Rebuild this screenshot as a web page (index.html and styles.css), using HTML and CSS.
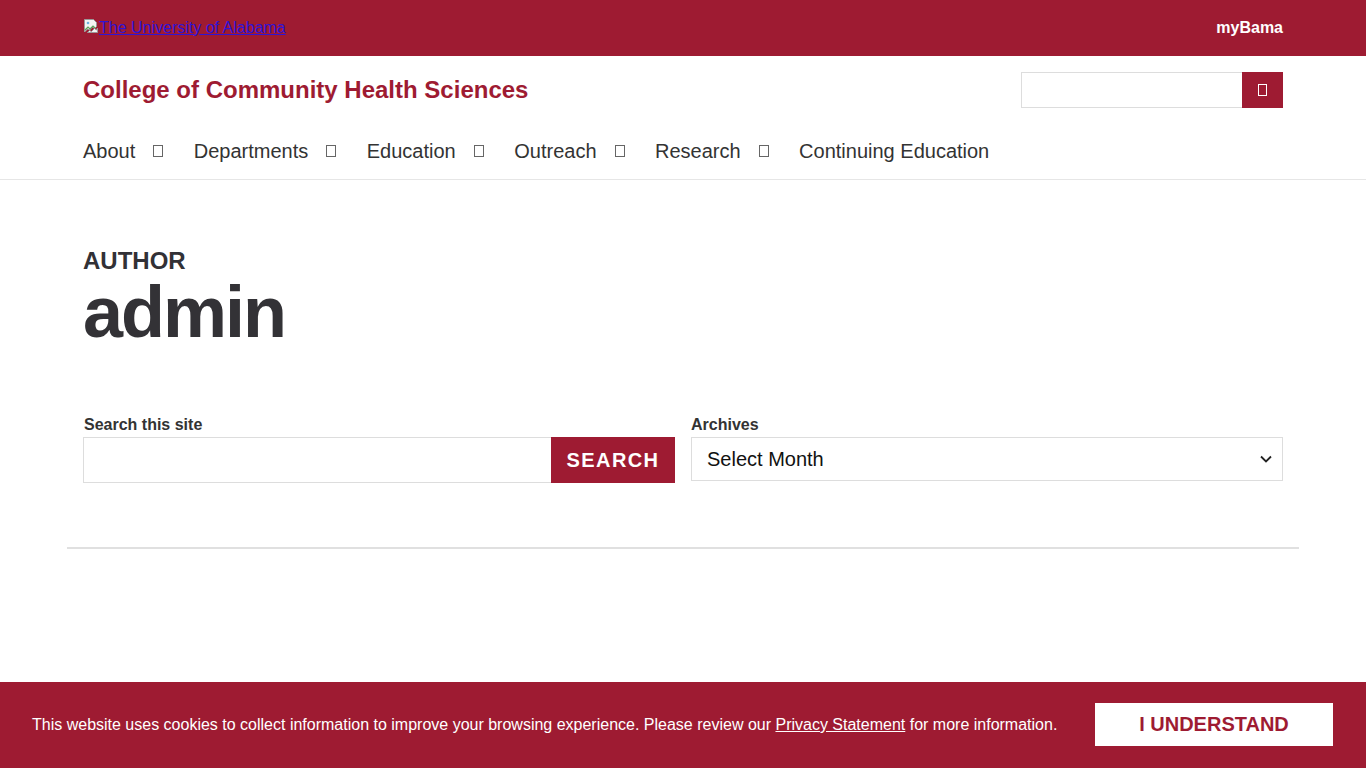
FILE: index.html
```html
<!DOCTYPE html>
<html lang="en">
<head>
<meta charset="utf-8">
<title>admin – College of Community Health Sciences</title>
<link rel="stylesheet" href="styles.css">
</head>
<body>
<header>
  <div class="topbar">
    <div class="container topbar-inner">
      <a class="ua-logo" href="#"><svg class="broken" width="16" height="16" viewBox="0 0 16 16"><path d="M1.5 1.5h9l3 3v4l-2 2-2-1.5-3 3-2-1-3 3z" fill="#f4f4f4" stroke="#9a9a9a"/><path d="M2 12l3-3 2 2 3-3 2 2" fill="none" stroke="#5aa05a" stroke-width="1.2"/><circle cx="5" cy="5" r="1.3" fill="#6bb0e0"/><path d="M14.5 10v4.5h-10l2-2 2 1 3-3 2 1.5z" fill="#f4f4f4" stroke="#9a9a9a"/></svg>The University of Alabama</a>
      <a class="mybama" href="#">myBama</a>
    </div>
  </div>
  <div class="container header-main">
    <a class="site-title" href="#">College of Community Health Sciences</a>
    <form class="header-search">
      <input type="text" class="header-search-input" aria-label="Search">
      <button type="button" class="header-search-btn"><span class="tofu tofu-white"></span></button>
    </form>
  </div>
  <nav class="main-nav">
    <ul class="container nav-list">
      <li><a href="#">About</a><span class="tofu"></span></li>
      <li><a href="#">Departments</a><span class="tofu"></span></li>
      <li><a href="#">Education</a><span class="tofu"></span></li>
      <li><a href="#">Outreach</a><span class="tofu"></span></li>
      <li><a href="#">Research</a><span class="tofu"></span></li>
      <li><a href="#">Continuing Education</a></li>
    </ul>
  </nav>
</header>

<main class="container main">
  <p class="kicker">AUTHOR</p>
  <h1 class="page-title">admin</h1>

  <div class="widgets">
    <div class="widget">
      <label class="widget-label label-search">Search this site</label>
      <div class="search-row">
        <input type="text" class="search-input" aria-label="Search this site">
        <button type="button" class="search-btn">SEARCH</button>
      </div>
    </div>
    <div class="widget">
      <label class="widget-label">Archives</label>
      <div class="select-box">
        <span>Select Month</span>
        <svg width="14" height="10" viewBox="0 0 14 10"><path d="M2 2.5l5 5 5-5" fill="none" stroke="#222" stroke-width="1.8"/></svg>
      </div>
    </div>
  </div>
</main>
<div class="rule-wrap"><hr class="rule"></div>

<div class="cookie-bar">
  <p class="cookie-text">This website uses cookies to collect information to improve your browsing experience. Please review our <a href="#">Privacy Statement</a> for more information.</p>
  <button type="button" class="cookie-btn">I UNDERSTAND</button>
</div>
</body>
</html>
```

FILE: styles.css
```css
* { box-sizing: border-box; }
html, body { margin: 0; padding: 0; }
body {
  font-family: "Liberation Sans", Arial, sans-serif;
  color: #333;
  background: #fff;
}
.container {
  width: 1200px;
  margin: 0 auto;
}
.topbar {
  background: #9e1b32;
  height: 56px;
}
.topbar-inner {
  height: 56px;
  display: flex;
  align-items: center;
  justify-content: space-between;
}
.ua-logo {
  display: flex;
  align-items: flex-start;
  font-size: 16px;
  line-height: 18px;
  color: #2f14d6;
  text-decoration: underline;
  margin-top: -1px;
}
.broken { flex: none; margin-top: -1px; }
.mybama {
  color: #fff;
  font-weight: bold;
  font-size: 16px;
  text-decoration: none;
  margin-top: 0;
}
.header-main {
  display: flex;
  justify-content: space-between;
  align-items: center;
  padding-top: 16px;
  height: 52px;
}
.site-title {
  color: #9e1b32;
  font-weight: bold;
  font-size: 24px;
  text-decoration: none;
}
.header-search {
  display: flex;
  height: 36px;
}
.header-search-input {
  width: 221px;
  height: 36px;
  border: 1px solid #ddd;
  border-right: none;
  margin: 0;
  padding: 0 8px;
  font-size: 16px;
}
.header-search-btn {
  width: 41px;
  height: 36px;
  background: #9e1b32;
  border: none;
  margin: 0;
  padding: 0;
  display: flex;
  align-items: center;
  justify-content: center;
}
.tofu {
  display: inline-block;
  width: 10px;
  height: 12px;
  border: 1px solid #666;
  margin-left: 18px;
  flex: none;
}
.tofu-white {
  border-color: #fff;
  width: 9px;
  margin-left: 0;
}
.main-nav {
  border-bottom: 1px solid #e6e6e6;
  margin-top: 31px;
}
.nav-list {
  list-style: none;
  padding: 0 0 16px;
  display: flex;
  gap: 30.5px;
}
.nav-list li {
  display: flex;
  align-items: center;
  font-size: 20px;
  line-height: 24px;
}
.nav-list a {
  color: #333;
  text-decoration: none;
}
.main {
  padding-top: 67px;
}
.kicker {
  margin: 0;
  font-size: 24px;
  line-height: 28px;
  font-weight: bold;
  color: #323136;
}
.page-title {
  margin: 1px 0 0;
  font-size: 72px;
  line-height: 72px;
  font-weight: bold;
  letter-spacing: -2px;
  color: #333236;
}
.widgets {
  display: grid;
  grid-template-columns: 1fr 1fr;
  gap: 16px;
  margin-top: 67px;
}
.widget-label {
  display: block;
  font-size: 16px;
  line-height: 20px;
  font-weight: bold;
  color: #333;
  margin: 0 0 2px 0;
}
.label-search { margin-left: 1px; }
.search-row {
  display: flex;
  height: 46px;
}
.search-input {
  flex: 1;
  height: 46px;
  border: 1px solid #ddd;
  border-right: none;
  margin: 0;
  font-size: 20px;
  padding: 0 12px;
}
.search-btn {
  width: 124px;
  height: 46px;
  background: #9e1b32;
  color: #fff;
  border: none;
  margin: 0;
  font-family: "Liberation Sans", Arial, sans-serif;
  font-weight: bold;
  font-size: 20px;
  letter-spacing: 1.4px;
}
.select-box {
  height: 44px;
  border: 1px solid #ddd;
  display: flex;
  align-items: center;
  justify-content: space-between;
  padding: 0 9px 0 15px;
  font-size: 20px;
  color: #111;
}
.rule-wrap {
  width: 1232px;
  margin: 64px auto 0;
}
.rule {
  margin: 0;
  border: none;
  height: 2px;
  background: #e0e0e0;
}
.cookie-bar {
  position: fixed;
  left: 0;
  right: 0;
  bottom: 0;
  height: 86px;
  background: #9e1b32;
  display: flex;
  align-items: center;
  justify-content: space-between;
  padding: 0 33px 0 32px;
}
.cookie-text {
  margin: 0;
  color: #fff;
  font-size: 16px;
}
.cookie-text a {
  color: #fff;
  text-decoration: underline;
}
.cookie-btn {
  width: 238px;
  height: 43px;
  background: #fff;
  color: #9e1b32;
  border: none;
  font-family: "Liberation Sans", Arial, sans-serif;
  font-weight: bold;
  font-size: 20px;
  margin-top: -1px;
}
```
